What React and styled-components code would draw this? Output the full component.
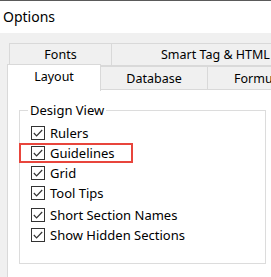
import React from 'react'
import styled, { createGlobalStyle } from 'styled-components'

const Global = createGlobalStyle`
  html, body { margin: 0; padding: 0; background: #f0f0f0; }
  body { font-family: "Noto Sans", "Open Sans", sans-serif; color: #000; }
`

const Window = styled.div`
  width: 271px;
  height: 277px;
  overflow: hidden;
  background: #f0f0f0;
  border-top: 1px solid #5a5a5a;
  box-sizing: border-box;
`

const TitleBar = styled.div`
  height: 32px;
  background: #fff;
  display: flex;
  align-items: center;
  padding: 0 0 1px 3px;
  box-sizing: border-box;
  font-size: 14px;
  color: #000;
`

const Body = styled.div`
  padding: 10px 0 0 7px;
`

const TabRow = styled.div`
  display: flex;
  height: ${p => p.h}px;
  margin-left: ${p => p.indent}px;
  position: relative;
  z-index: ${p => p.front ? 2 : 1};
`

const Tab = styled.div`
  flex: none;
  width: ${p => p.w}px;
  box-sizing: border-box;
  display: flex;
  align-items: center;
  justify-content: ${p => p.align || 'center'};
  padding-left: ${p => p.pad || 0}px;
  font-size: 12.5px;
  white-space: nowrap;
  overflow: hidden;
  background: ${p => p.active ? '#fff' : '#f0f0f0'};
  border: 1px solid #d9d9d9;
  border-bottom: ${p => p.active ? 'none' : '1px solid #d9d9d9'};
  border-left: ${p => p.noLeft ? 'none' : '1px solid #d9d9d9'};
  margin-top: ${p => p.active ? -2 : 0}px;
  height: ${p => p.active ? 'calc(100% + 3px)' : '100%'};
  padding-bottom: ${p => p.active ? 4 : 0}px;
`

const Panel = styled.div`
  background: #fff;
  border: 1px solid #d9d9d9;
  border-right: none;
  margin-top: -1px;
  height: 200px;
  padding: 11px 0 0 11px;
  box-sizing: border-box;
`

const Group = styled.fieldset`
  margin: 0;
  width: 247px;
  height: 163px;
  box-sizing: border-box;
  border: 1px solid #dcdcdc;
  padding: 4px 0 0 0;
  display: flex;
  flex-direction: column;
`

const Legend = styled.legend`
  font-size: 13px;
  padding: 0 2px;
  margin-left: 8px;
`

const Row = styled.div`
  display: flex;
  align-items: center;
  gap: 5px;
  height: 20px;
  margin-top: ${p => p.extra || 0}px;
  margin-left: -1px;
  padding-left: 12px;
  width: ${p => p.highlight ? '114px' : 'auto'};
  box-sizing: border-box;
  font-size: 13px;
  box-shadow: ${p => p.highlight ? 'inset 0 0 0 2px #e8453c' : 'none'};
`

const Box = styled.span`
  width: 14px;
  height: 14px;
  flex: none;
  box-sizing: border-box;
  border: 1px solid #333;
  background: #fff;
  display: flex;
  align-items: center;
  justify-content: center;
`

function Check() {
  return (
    <Box>
      <svg width="12" height="12" viewBox="0 0 12 12">
        <path d="M1.8 6 L4.6 8.8 L10.2 3" fill="none" stroke="#333" strokeWidth="1.2" />
      </svg>
    </Box>
  )
}

const items = [
  { label: 'Rulers' },
  { label: 'Guidelines', highlight: true },
  { label: 'Grid' },
  { label: 'Tool Tips' },
  { label: 'Short Section Names', extra: 2 },
  { label: 'Show Hidden Sections' },
]

export default function App() {
  return (
    <Window>
      <Global />
      <TitleBar>Options</TitleBar>
      <Body>
        <TabRow h={23} indent={2}>
          <Tab w={103}>Fonts</Tab>
          <Tab w={170} noLeft align="flex-start" pad={49}>Smart Tag &amp; HTML</Tab>
        </TabRow>
        <TabRow h={24} indent={0} front>
          <Tab w={94} active>Layout</Tab>
          <Tab w={107} noLeft>Database</Tab>
          <Tab w={80} noLeft align="flex-start" pad={26}>Formulas</Tab>
        </TabRow>
        <Panel>
          <Group>
            <Legend>Design View</Legend>
            {items.map(it => (
              <Row key={it.label} highlight={it.highlight} extra={it.extra}>
                <Check />
                <span>{it.label}</span>
              </Row>
            ))}
          </Group>
        </Panel>
      </Body>
    </Window>
  )
}
